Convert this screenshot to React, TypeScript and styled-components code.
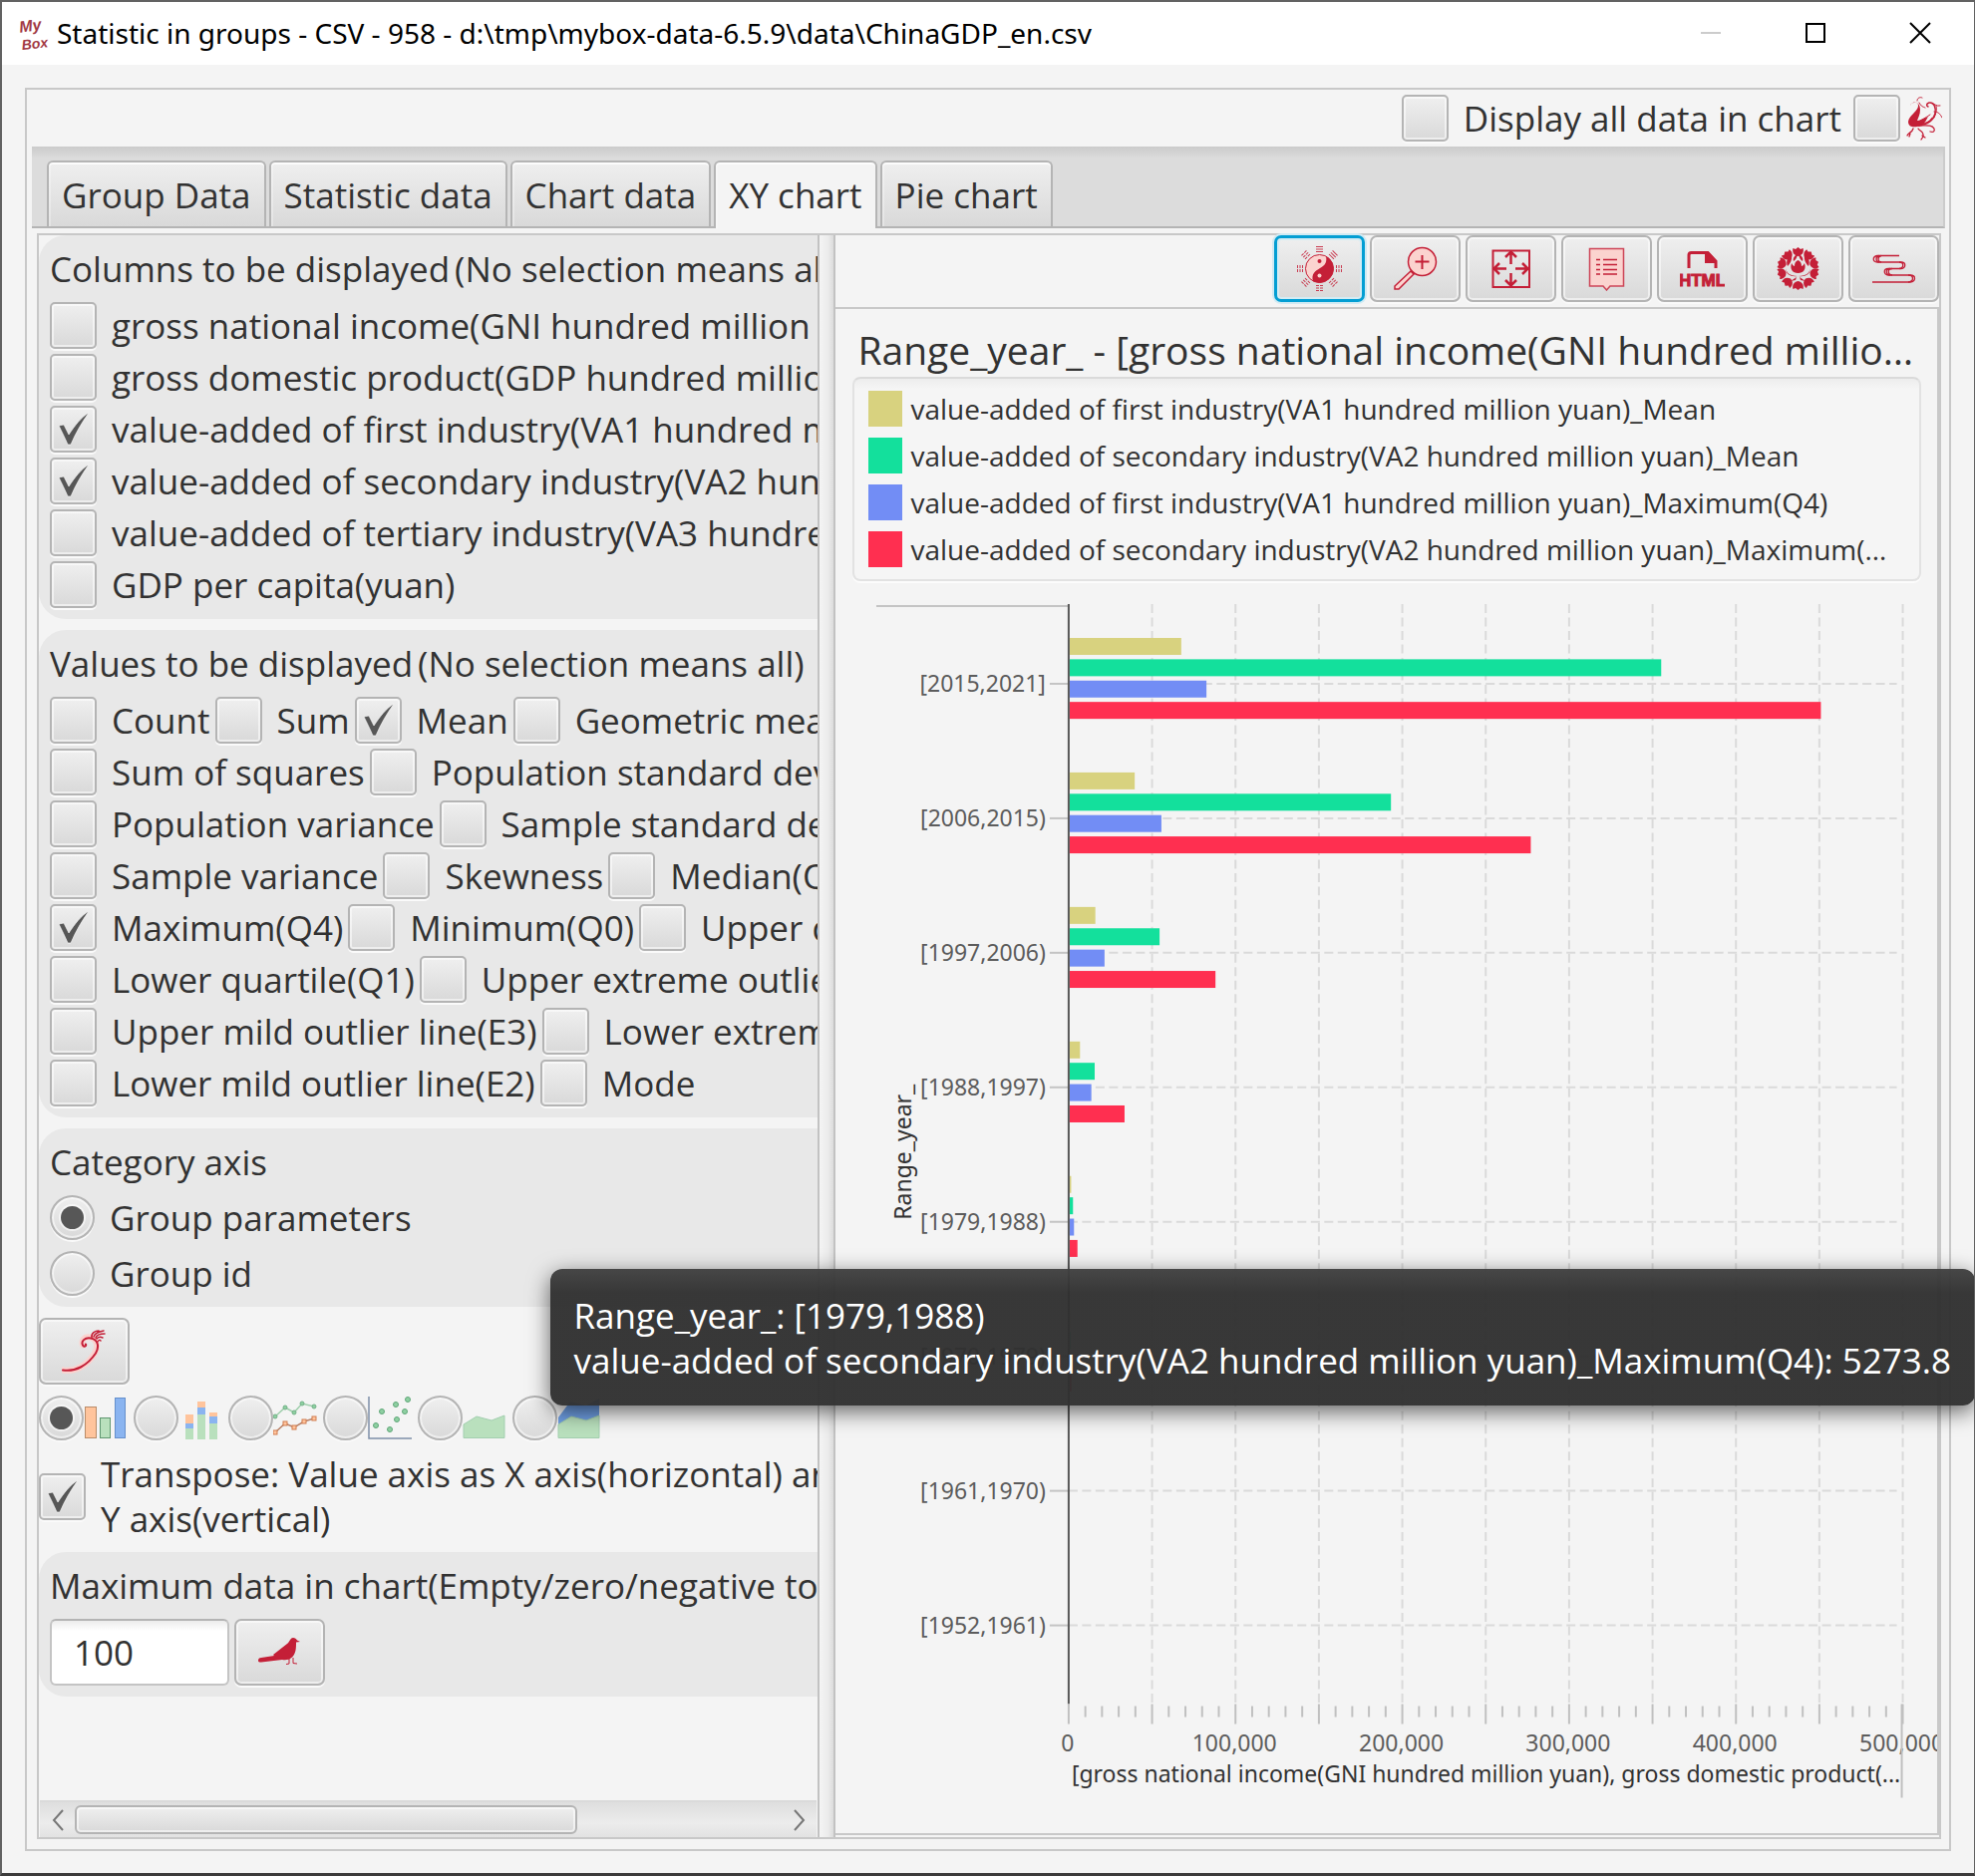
import React, { useId } from "react";
import styled, { createGlobalStyle, css } from "styled-components";

const RED = "#c41f37";
const PINK = "#fbd3cf";
const LINE = "#c8c8c8";
const INK = "#323232";

const Global = createGlobalStyle`
  * { box-sizing: border-box; }
  body { margin: 0; background: #f4f4f4; }
  body, button, input {
    font-family: "Open Sans", "Noto Sans", sans-serif;
    font-size: 35px;
    line-height: 45px;
    color: ${INK};
  }
  button { padding: 0; border: 0; background: none; }
`;

const raised = css`
  border: 2px solid #b4b4b4;
  background: linear-gradient(#efefef, #d9d9d9);
  box-shadow: inset 0 0 0 2px rgba(255, 255, 255, 0.55), 0 2px 0 #fafafa;
`;

/* ---------- window ---------- */

const Window = styled.div`
  position: relative;
  display: flex;
  flex-direction: column;
  height: 100vh;
  overflow: hidden;
  background: #f4f4f4;
  border: solid #626262;
  border-width: 2px 1px 3px 2px;
  border-bottom-color: #3c3b3b;
`;

const TitleBar = styled.header`
  display: flex;
  align-items: center;
  flex: none;
  height: 63px;
  padding: 0 2px 2px 14px;
  background: #fff;
`;

const TitleText = styled.h1`
  flex: 1;
  margin: 0 0 0 7px;
  font-family: "Noto Sans", sans-serif;
  font-size: 28px;
  font-weight: 400;
  line-height: 40px;
  color: #000;
  white-space: nowrap;
`;

const WindowButton = styled.button`
  display: grid;
  place-items: center;
  width: 105px;
  height: 60px;
`;

const Body = styled.main`
  flex: 1;
  display: flex;
  min-height: 0;
  padding: 23px 23px 22px;
`;

const Frame = styled.div`
  flex: 1;
  display: flex;
  flex-direction: column;
  min-width: 0;
  padding: 5px 4px 10px 5px;
  border: 2px solid ${LINE};
`;

const OptionsBar = styled.div`
  display: flex;
  justify-content: flex-end;
  align-items: center;
  gap: 12px;
  padding-bottom: 5px;
`;

/* ---------- tabs ---------- */

const TabStrip = styled.div`
  display: flex;
  align-items: flex-end;
  gap: 3px;
  flex: none;
  height: 82px;
  padding-left: 15px;
  border-right: 2px solid #cbcbcb;
  border-bottom: 2px solid #b4b4b4;
  background: linear-gradient(#cbcbcb, #dcdcdc 12px);
`;

const Tab = styled.button<{ $active?: boolean }>`
  height: 66px;
  padding: 0 13px;
  border: 2px solid #b4b4b4;
  border-bottom: 0;
  border-radius: 6px 6px 0 0;
  background: linear-gradient(#efefef, #d9d9d9);
  box-shadow: inset 0 2px 0 rgba(255, 255, 255, 0.8), inset 2px 0 0 rgba(255, 255, 255, 0.3);
  white-space: nowrap;
  ${(p) =>
    p.$active &&
    css`
      height: 68px;
      margin-bottom: -2px;
      padding-bottom: 2px;
      background: #f4f4f4;
    `}
`;

/* ---------- split pane ---------- */

const SplitPane = styled.div`
  flex: 1;
  display: flex;
  min-height: 0;
  margin: 5px 4px 0 5px;
  border: 2px solid ${LINE};
`;

const SidePane = styled.section`
  flex: 0 0 41%;
  display: flex;
  flex-direction: column;
  min-width: 0;
`;

const Divider = styled.div`
  flex: none;
  width: 18px;
  border: solid #c2c2c2;
  border-width: 0 2px;
  background: linear-gradient(90deg, #f4f4f4, #ececec 60%, #dcdcdc);
`;

const Viewport = styled.div`
  flex: 1;
  min-height: 0;
  overflow: hidden;
`;

const Form = styled.div`
  display: flex;
  flex-direction: column;
  gap: 11px;
  width: 1220px;
`;

const Group = styled.fieldset`
  display: flex;
  flex-direction: column;
  margin: 0;
  min-width: 0;
  padding: 11px;
  border: 0;
  border-radius: 27px;
  background: #e8e8e8;
`;

const GroupTitle = styled.div`
  display: flex;
  gap: 5px;
  margin-bottom: 11px;
  white-space: nowrap;
`;

const Rows = styled.div<{ $gap: number }>`
  display: flex;
  flex-direction: column;
  gap: ${(p) => p.$gap}px;
`;

const Row = styled.div`
  display: flex;
  align-items: center;
  gap: 5px;
`;

const Choice = styled.label`
  display: flex;
  align-items: center;
  gap: 15px;
  white-space: nowrap;
  svg { flex: none; }
`;

const IconChoice = styled(Choice)`
  gap: 0;
`;

const PhoenixChoice = styled(Choice)`
  gap: 6px;
  margin-right: 3px;
`;

const CheckCell = styled.span`
  display: grid;
  flex: none;
  width: 47px;
  height: 47px;
  > * { grid-area: 1 / 1; }
  svg { visibility: hidden; pointer-events: none; }
  input:checked + svg { visibility: visible; }
`;

const CheckInput = styled.input`
  appearance: none;
  margin: 0;
  width: 47px;
  height: 47px;
  border-radius: 5px;
  ${raised}
`;

const RadioInput = styled.input`
  appearance: none;
  display: grid;
  place-items: center;
  flex: none;
  margin: 0;
  width: 45px;
  height: 45px;
  border-radius: 50%;
  ${raised}
  &:checked::after {
    content: "";
    width: 23px;
    height: 23px;
    border-radius: 50%;
    background: #575757;
    box-shadow: 0 0 0 2px rgba(255, 255, 255, 0.6);
  }
`;

const ToolButton = styled.button<{ $focus?: boolean }>`
  display: grid;
  place-items: center;
  flex: none;
  width: 91px;
  height: 67px;
  border-radius: 7px;
  ${raised}
  ${(p) =>
    p.$focus &&
    css`
      border: 3px solid #039ed3;
      box-shadow: inset 0 0 0 2px #d4ecf4, 0 0 0 2px #d0eaf3;
    `}
`;

const FormButton = styled(ToolButton)`
  align-self: flex-start;
`;

const NumberField = styled.input`
  width: 180px;
  height: 67px;
  padding: 0 22px;
  border: 2px solid #c4c4c4;
  border-top-color: #b4b4b4;
  border-radius: 6px;
  background: linear-gradient(#ececec, #fff 10px);
`;

const ScrollBar = styled.div`
  display: flex;
  align-items: center;
  flex: none;
  height: 37px;
  margin: 0 1px;
  border-top: 2px solid #dadada;
  background: linear-gradient(#dedede, #ececec 60%, #e2e2e2);
`;

const ScrollTrack = styled.div`
  flex: 1;
  height: 29px;
`;

const ScrollThumb = styled.div`
  width: 71%;
  height: 29px;
  border-radius: 6px;
  ${raised}
  box-shadow: inset 0 0 0 2px rgba(255, 255, 255, 0.55);
`;

const ScrollButton = styled.button`
  display: grid;
  place-items: center;
  width: 35px;
  height: 30px;
`;

/* ---------- chart pane ---------- */

const ChartPane = styled.section`
  flex: 1;
  display: flex;
  flex-direction: column;
  min-width: 0;
  padding-bottom: 2px;
`;

const ToolBar = styled.div`
  display: flex;
  justify-content: flex-end;
  gap: 5px;
  flex: none;
  height: 72px;
`;

const ChartScroll = styled.div`
  flex: 1;
  min-height: 0;
  padding-top: 14px;
  overflow: hidden;
  border: solid ${LINE};
  border-width: 2px 2px 2px 0;
`;

const ChartTitle = styled.h2`
  margin: 0 18px 0 22px;
  font-size: 39px;
  font-weight: 400;
  line-height: 54px;
  white-space: nowrap;
  overflow: hidden;
  text-overflow: ellipsis;
`;

const Legend = styled.ul`
  display: flex;
  flex-direction: column;
  gap: 11px;
  margin: 0 16px 0 17px;
  padding: 12px 30px 12px 14px;
  list-style: none;
  border: 2px solid #e2e2e2;
  border-top-color: #dadada;
  border-radius: 8px;
  background: linear-gradient(#ededed, #f5f5f5 10px);
  box-shadow: 0 2px 0 #fcfcfc;
`;

const LegendItem = styled.li`
  display: flex;
  align-items: center;
  gap: 8px;
  height: 36px;
  font-size: 28px;
  line-height: 36px;
`;

const Swatch = styled.span<{ $color: string }>`
  flex: none;
  width: 34px;
  height: 36px;
  background: ${(p) => p.$color};
`;

const LegendText = styled.span`
  min-width: 0;
  white-space: nowrap;
  overflow: hidden;
  text-overflow: ellipsis;
`;

const Plot = styled.svg`
  display: block;
  width: 100%;
  margin-top: 7px;
  font-family: "Noto Sans", sans-serif;
  font-size: 23px;
`;

const Tooltip = styled.div`
  position: absolute;
  top: 1271px;
  right: -1px;
  padding: 24px 24px 23px;
  border-radius: 12px;
  background: linear-gradient(rgba(64, 64, 64, 0.96), rgba(48, 48, 48, 0.96) 24px);
  box-shadow: 0 6px 22px rgba(0, 0, 0, 0.6);
  color: #fff;
  white-space: nowrap;
`;

/* ---------- controls ---------- */

const Check = ({ label, on, children }: { label?: string; on?: boolean; children?: React.ReactNode }) => {
  const id = useId();
  return (
    <Choice htmlFor={id}>
      <CheckCell>
        <CheckInput id={id} type="checkbox" defaultChecked={on} />
        <svg width="47" height="47" viewBox="0 0 47 47" aria-hidden="true">
          <path d="M9 20l5-1 5 10C25 20 31 12 39 7c-7 10-13 20-18 32h-3C15 32 12 26 9 20z" fill="#575757" stroke="#fff" strokeWidth="1" strokeOpacity=".6" />
        </svg>
      </CheckCell>
      {label ? <span>{label}</span> : children}
    </Choice>
  );
};

const Radio = ({ name, label, on }: { name: string; label: string; on?: boolean }) => {
  const id = useId();
  return (
    <Choice htmlFor={id}>
      <RadioInput id={id} type="radio" name={name} defaultChecked={on} />
      <span>{label}</span>
    </Choice>
  );
};

/* ---------- icons ---------- */

const Icon = ({ children, size = 45 }: { children: React.ReactNode; size?: number }) => (
  <svg width={size} height={size} viewBox="0 0 45 45" fill="none" aria-hidden="true">
    {children}
  </svg>
);

const MyBoxLogo = () => (
  <svg width="34" height="42" viewBox="0 0 34 42" fill="#a23a45" fontFamily="Liberation Sans, sans-serif" fontStyle="italic" fontWeight="700" aria-hidden="true">
    <text x="4" y="20" fontSize="16" transform="rotate(-8 10 20)">My</text>
    <text x="6" y="37" fontSize="14" transform="rotate(-6 16 36)">Box</text>
  </svg>
);

const Phoenix = () => (
  <svg width="36" height="46" viewBox="0 0 36 46" fill="none" stroke={RED} strokeLinecap="round" aria-hidden="true">
    <path d="M4 10c1-4 7-5 8-1 1 6-9 10-10 17 0 5 5 6 9 5 6-1 8-4 11-10-5 2-8 4-11 4 1-3 3-6 3-11 0-5-3-8-6-7-2 0-4 1-4 3z" fill={RED} strokeWidth="0" />
    <path d="M11 5c0-3 3-4 5-3M13 7c2 4 4 4 6 5M12 26c6-3 9-5 12-7M14 28c7 0 10-3 12-6" strokeWidth="1" />
    <path d="M12 30c8-1 15-4 17-12 1-6-1-12-6-11-3 1-3 3-1 4" strokeWidth="1.500" />
    <path d="M27 8c2 0 3 3 7 2M28 16c4 0 6 2 8 6M30 10c1 4 0 8-2 12" strokeWidth="1" />
    <path d="M13 30c7 0 13-1 15 3 1 3-1 4-4 3M7 33c-1 4-5 4-6 7M12 33c2 3 6 3 5 8l-2 3M4 38l-1 3M16 40l3 2" strokeWidth="1.300" />
  </svg>
);

const Trigram = ({ angle, broken }: { angle: number; broken: boolean }) => (
  <g transform={`rotate(${angle} 22.5 22.5)`}>
    <path d="M19 .5h7M19 3h7M19 5.500h7" stroke={RED} strokeOpacity=".85" strokeWidth="1" strokeDasharray={broken ? "3 1" : undefined} />
  </g>
);

const YinYang = () => (
  <Icon>
    {[0, 45, 90, 135, 180, 225, 270, 315].map((a) => (
      <Trigram key={a} angle={a} broken={a > 45} />
    ))}
    <circle cx="22.500" cy="22.500" r="14" fill={PINK} stroke={RED} strokeWidth="1" />
    <path d="M29 10a14 14 0 1 1-13 25c-2-7 2-10 7-13 6-3 7-7 6-12z" fill={RED} />
    <circle cx="22.500" cy="15" r="2" fill={RED} />
    <circle cx="22.500" cy="29.500" r="2" fill={PINK} />
  </Icon>
);

const Magnifier = () => (
  <Icon>
    <path d="M18 25L2 40v3h4l15-15z" fill={PINK} stroke={RED} strokeWidth="1.500" />
    <circle cx="29.500" cy="15.500" r="14" fill={PINK} stroke={RED} strokeWidth="1.500" />
    <path d="M29.500 9v14M22.500 15.500h14" stroke={RED} strokeWidth="2" />
  </Icon>
);

const Expand = () => (
  <Icon>
    <rect x="4.500" y="4.500" width="36.500" height="36.500" stroke={RED} strokeWidth="2" />
    <path d="M22.500 18V6M17 11l5.500-5.500L28 11M22.500 27v12M17 34l5.500 5.500L28 34M18 22.500H6M11 17l-5.500 5.500L11 28M27 22.500h12M34 17l5.500 5.500L34 28" stroke={RED} strokeWidth="2.500" />
  </Icon>
);

const Note = () => (
  <Icon>
    <path d="M5.500 2.500h34V40H26l-3.500 4-3.500-4H5.500z" fill={PINK} stroke={RED} strokeOpacity=".8" strokeWidth="1.500" />
    <path d="M12 13.500h4M19 13.500h14M12 18.500h4M19 18.500h14M12 23.500h4M19 23.500h14M12 28h4M19 28h14" stroke={RED} strokeWidth="1.300" />
  </Icon>
);

const Html = () => (
  <Icon>
    <path d="M9 22V9q0-2.500 2.500-2.500H28L36 15v7" stroke={RED} strokeWidth="3" />
    <path d="M25 6h4l8 9v2H25z" fill={RED} />
    <text x="22.500" y="39.500" textAnchor="middle" fontFamily="Liberation Sans, sans-serif" fontSize="17" fontWeight="700" fill={RED} stroke={RED} strokeWidth="1">
      HTML
    </text>
  </Icon>
);

const PETAL = "M22.500 10c-5-1-6-5-5-8l2.500 1L22.500 1 25 3l2.500-1c1 3 0 7-5 8z";

const Peony = () => (
  <Icon>
    <g fill={RED}>
      {[0, 38, 72, 106, 143, 180, 217, 254, 288, 322].map((a) => (
        <path key={a} d={PETAL} transform={`rotate(${a} 22.5 22.5)`} />
      ))}
      <path d="M16 9c-4 2-6 6-4 11 2-2 5-6 4-11zM29 9c4 2 6 6 4 11-2-2-5-6-4-11zM20 9c-2 2-3 4-2 6 2-1 3-3 4-6zM25 9c2 2 3 4 2 6-2-1-3-3-4-6z" />
      <path d="M16 17c-2 6 1 10 6.500 10s8.500-4 6.500-10c-1 2-2 3-3 3 0-3-1-5-3.500-6-2.500 1-3.500 3-3.500 6-1 0-2-1-3-3z" />
      <path d="M10 21c0 5 4 9 12 9-6 1-12-1-12-9zM35 21c0 5-4 9-12 9 6 1 12-1 12-9zM21 31l-6 4 5-1zM24 31l6 4-5-1z" />
    </g>
  </Icon>
);

const River = () => (
  <Icon>
    <g stroke={RED} strokeWidth="1.300">
      <path d="M28 9.500H6c-5 1-5 6 0 6.500h24c5 0 5 6 0 6.500H17c-5 0-5 6 0 6.500h22c6 0 6 6 0 7H1" />
      <path d="M8 9.500c-4 1-4 6 0 6.500M10 9.500c-4 1-4 6 0 6.500M28 16c5 0 5 6 0 6.500M19 22.500c-5 0-5 6 0 6.500M21 22.500c-5 0-5 6 0 6.500M37 29c6 0 6 6 0 7" />
    </g>
  </Icon>
);

const Plume = () => (
  <Icon>
    <g strokeLinecap="round">
      <path d="M1 41.500c13 2 25-5 32-17 4-7 2-15-5-16-5-1-9 3-7 8" stroke={PINK} strokeWidth="6" />
      <path d="M1 41.500c13 2 25-5 33-17 4-7 2-14-5-15-6-1-10 3-8 7 1 2 4 1 3-1" stroke={RED} strokeWidth="2" />
      <path d="M30 9c-1-5 4-7 7-7M32 8c1-4 5-5 10-6M34 9c1-3 4-4 9-4M35 10c2-2 4-2 6-1M36 13c1-2 2-2 3-1" stroke={RED} strokeWidth="1.500" />
    </g>
  </Icon>
);

const Bird = () => (
  <Icon>
    <path d="M1 31c0-2 1-3 3-3l13-2-1-1 14-11c2-1 3-6 6-6 2 0 3 1 4 2.500l3 1.500-4 .5c0 6 0 11-4 15-3 3-7 3-10 2.500L4 32.500c-2 0-3 0-3-1.500z" fill={RED} />
    <path d="M32 29v5l-3 .500M36 28v5.500l4 .500" stroke={RED} strokeWidth="1" />
  </Icon>
);

const GREEN = "#b9e0bd";
const BLUE = "#8ab4f0";
const ORANGE = "#ffc49c";

const BarIcon = () => (
  <Icon>
    <rect x="1.500" y="11.500" width="11" height="31" fill={ORANGE} stroke="#b98c69" />
    <rect x="16.500" y="22.500" width="10" height="20" fill={GREEN} stroke="#5f9770" />
    <rect x="31.500" y="2.500" width="10" height="40" fill={BLUE} stroke="#6590cc" />
  </Icon>
);

const StackedIcon = () => (
  <Icon>
    {[[7, 19, 28, 33], [19, 6, 12, 19], [31, 17, 21, 28]].map(([x, a, b, c]) => (
      <g key={x}>
        <rect x={x} y={a} width="8" height={b - a} fill={ORANGE} />
        <rect x={x} y={b} width="8" height={c - b} fill={BLUE} />
        <rect x={x} y={c} width="8" height={44 - c} fill={GREEN} />
      </g>
    ))}
  </Icon>
);

const greenLine = [[2, 21], [12, 12], [21, 17], [29, 8], [41, 11]];
const orangeLine = [[2, 37], [12, 28], [21, 32], [31, 26], [41, 23]];

const LineIcon = () => (
  <Icon>
    <polyline points={greenLine.join(" ")} stroke="#9fcfac" strokeWidth="1.500" />
    {greenLine.map(([x, y]) => <circle key={x} cx={x} cy={y} r="2" fill="#8cd0a0" stroke="#74b088" />)}
    <polyline points={orangeLine.join(" ")} stroke="#b98268" strokeWidth="1.500" />
    {orangeLine.map(([x, y]) => <rect key={x} x={x - 2} y={y - 2} width="4" height="4" fill={ORANGE} stroke="#d07c50" />)}
  </Icon>
);

const ScatterIcon = () => (
  <Icon>
    <path d="M1 1v42h43" stroke="#7e8fa8" strokeWidth="1.500" />
    {[[8, 30], [14, 16], [22, 34], [29, 24], [28, 9], [37, 16], [40, 4]].map(([x, y]) => (
      <circle key={x} cx={x} cy={y} r="2.500" fill="#8fd0a2" stroke="#5fa678" />
    ))}
  </Icon>
);

const AreaIcon = () => (
  <Icon>
    <path d="M1 42.500V29l13-8 15 4 13-5v22.500z" fill={GREEN} stroke="#a3cfb0" />
  </Icon>
);

const StackedAreaIcon = () => (
  <Icon>
    <path d="M1 30V22L13 6l16 4 13-7v20z" fill="#6f9fe4" />
    <path d="M1 42.500V29l13-8 15 4 13-5v22.500z" fill={GREEN} stroke="#a3cfb0" />
  </Icon>
);

/* ---------- data ---------- */

const tabs = ["Group Data", "Statistic data", "Chart data", "XY chart", "Pie chart"];

const columns: [string, boolean][] = [
  ["gross national income(GNI hundred million yuan)", false],
  ["gross domestic product(GDP hundred million yuan)", false],
  ["value-added of first industry(VA1 hundred million yuan)", true],
  ["value-added of secondary industry(VA2 hundred million yuan)", true],
  ["value-added of tertiary industry(VA3 hundred million yuan)", false],
  ["GDP per capita(yuan)", false],
];

const valueRows = [
  ["Count", "Sum", "Mean", "Geometric mean"],
  ["Sum of squares", "Population standard deviation"],
  ["Population variance", "Sample standard deviation"],
  ["Sample variance", "Skewness", "Median(Q2)"],
  ["Maximum(Q4)", "Minimum(Q0)", "Upper quartile(Q3)"],
  ["Lower quartile(Q1)", "Upper extreme outlier line(E4)"],
  ["Upper mild outlier line(E3)", "Lower extreme outlier line(E1)"],
  ["Lower mild outlier line(E2)", "Mode"],
];
const checkedValues = ["Mean", "Maximum(Q4)"];

const chartKinds: [string, () => React.ReactElement][] = [
  ["Bar chart", BarIcon],
  ["Stacked bar chart", StackedIcon],
  ["Line chart", LineIcon],
  ["Scatter chart", ScatterIcon],
  ["Area chart", AreaIcon],
  ["Stacked area chart", StackedAreaIcon],
];

const tools: [string, () => React.ReactElement][] = [
  ["Style", YinYang],
  ["Zoom in", Magnifier],
  ["Fit size", Expand],
  ["Notes", Note],
  ["HTML", Html],
  ["Options", Peony],
  ["Flow", River],
];

const series = [
  { name: "value-added of first industry(VA1 hundred million yuan)_Mean", color: "#d8d27f" },
  { name: "value-added of secondary industry(VA2 hundred million yuan)_Mean", color: "#13e09c" },
  { name: "value-added of first industry(VA1 hundred million yuan)_Maximum(Q4)", color: "#728df5" },
  { name: "value-added of secondary industry(VA2 hundred million yuan)_Maximum(Q4)", color: "#ff2f50" },
];

const categories: [string, number[]][] = [
  ["[2015,2021]", [67500, 355200, 82600, 450904]],
  ["[2006,2015)", [39600, 193200, 55600, 277000]],
  ["[1997,2006)", [16000, 54500, 21500, 88000]],
  ["[1988,1997)", [6800, 15600, 13600, 33500]],
  ["[1979,1988)", [1500, 2600, 3200, 5273]],
  ["[1970,1979)", [900, 1100, 1100, 1700]],
  ["[1961,1970)", [0, 0, 0, 0]],
  ["[1952,1961)", [0, 0, 0, 0]],
];

/* ---------- chart ---------- */

const AXIS_X = 234;
const PLOT_W = 837;
const TOP = 16;
const BOTTOM = 1120;
const MAX = 500000;
const xOf = (v: number) => AXIS_X + (v / MAX) * PLOT_W;
const yOf = (i: number) => 96 + i * 135;

const BarPlot = () => (
  <Plot viewBox="0 0 1105 1240" role="img" aria-label="Range_year_ bar chart">
    {[...Array(10)].map((_, i) => (
      <line key={i} x1={xOf((i + 1) * 50000)} x2={xOf((i + 1) * 50000)} y1={TOP} y2={BOTTOM} stroke="#dadada" strokeWidth="2" strokeDasharray="9 4.5" />
    ))}
    {categories.map(([name, values], i) => (
      <g key={name}>
        <line x1={AXIS_X} x2={AXIS_X + 831} y1={yOf(i)} y2={yOf(i)} stroke="#dadada" strokeWidth="2" strokeDasharray="9 4.5" />
        <line x1={AXIS_X - 19} x2={AXIS_X} y1={yOf(i)} y2={yOf(i)} stroke="#c4c4c4" strokeWidth="2" />
        <text x={AXIS_X - 23} y={yOf(i) + 8} textAnchor="end" fill="#5c5c5c">{name}</text>
        {values.map((v, k) => (
          <rect key={k} x={AXIS_X + 1} y={yOf(i) - 46 + k * 21.4} width={v && xOf(v) - AXIS_X - 1} height="17" fill={series[k].color} />
        ))}
      </g>
    ))}
    <line x1="41" x2={AXIS_X} y1={TOP + 2} y2={TOP + 2} stroke="#c4c4c4" strokeWidth="2" />
    <line x1={AXIS_X} x2={AXIS_X} y1={TOP} y2={BOTTOM} stroke="#575757" strokeWidth="2" />
    {[...Array(51)].map((_, i) => (
      <line key={i} x1={xOf(i * 10000)} x2={xOf(i * 10000)} y1={i % 5 ? BOTTOM + 2 : BOTTOM} y2={i % 5 ? BOTTOM + 13 : BOTTOM + 20} stroke="#c0c0c0" strokeWidth="2" />
    ))}
    {[0, 1, 2, 3, 4, 5].map((i) => (
      <text key={i} x={xOf(i * 100000) - 1} y="1168" textAnchor="middle" fill="#5c5c5c">
        {(i * 100000).toLocaleString("en-US")}
      </text>
    ))}
    <line x1="1070" x2="1070" y1={BOTTOM} y2="1214" stroke="#c0c0c0" strokeWidth="2" />
    <text x="237" y="1199" fill={INK}>[gross national income(GNI hundred million yuan), gross domestic product(...</text>
    <text x="76" y="634" fill={INK} transform="rotate(-90 76 634)">Range_year_</text>
  </Plot>
);

/* ---------- page ---------- */

const KindChoice = ({ label, on, children }: { label: string; on: boolean; children: React.ReactNode }) => {
  const id = useId();
  return (
    <IconChoice htmlFor={id}>
      <RadioInput id={id} type="radio" name="kind" aria-label={label} defaultChecked={on} />
      {children}
    </IconChoice>
  );
};

const TipsCheck = () => {
  const id = useId();
  return (
    <PhoenixChoice htmlFor={id}>
      <CheckInput id={id} type="checkbox" aria-label="Show tips" />
      <Phoenix />
    </PhoenixChoice>
  );
};

export default function App() {
  return (
    <Window>
      <Global />
      <TitleBar>
        <MyBoxLogo />
        <TitleText>Statistic in groups - CSV - 958 - d:\tmp\mybox-data-6.5.9\data\ChinaGDP_en.csv</TitleText>
        <WindowButton aria-label="Minimize">
          <svg width="22" height="22" viewBox="0 0 22 22"><path d="M1 11h20" stroke="#ccc" strokeWidth="2" /></svg>
        </WindowButton>
        <WindowButton aria-label="Maximize">
          <svg width="22" height="22" viewBox="0 0 22 22"><path d="M2 2h18v18H2z" fill="none" stroke="#000" strokeWidth="2" /></svg>
        </WindowButton>
        <WindowButton aria-label="Close">
          <svg width="22" height="22" viewBox="0 0 22 22"><path d="M1 1l20 20M21 1L1 21" stroke="#000" strokeWidth="2" /></svg>
        </WindowButton>
      </TitleBar>
      <Body>
        <Frame>
          <OptionsBar>
            <Check label="Display all data in chart" />
            <TipsCheck />
          </OptionsBar>
          <TabStrip role="tablist">
            {tabs.map((t) => (
              <Tab key={t} role="tab" aria-selected={t === "XY chart"} $active={t === "XY chart"}>{t}</Tab>
            ))}
          </TabStrip>
          <SplitPane>
            <SidePane>
              <Viewport>
                <Form>
                  <Group>
                    <GroupTitle><span>Columns to be displayed</span><span>(No selection means all)</span></GroupTitle>
                    <Rows $gap={5}>
                      {columns.map(([label, on]) => <Check key={label} label={label} on={on} />)}
                    </Rows>
                  </Group>
                  <Group>
                    <GroupTitle><span>Values to be displayed</span><span>(No selection means all)</span></GroupTitle>
                    <Rows $gap={5}>
                      {valueRows.map((row) => (
                        <Row key={row[0]}>
                          {row.map((label) => <Check key={label} label={label} on={checkedValues.includes(label)} />)}
                        </Row>
                      ))}
                    </Rows>
                  </Group>
                  <Group>
                    <GroupTitle>Category axis</GroupTitle>
                    <Rows $gap={11}>
                      <Radio name="axis" label="Group parameters" on />
                      <Radio name="axis" label="Group id" />
                    </Rows>
                  </Group>
                  <FormButton aria-label="Plot style"><Plume /></FormButton>
                  <Row>
                    {chartKinds.map(([label, Glyph], i) => (
                      <KindChoice key={label} label={label} on={i === 0}><Glyph /></KindChoice>
                    ))}
                  </Row>
                  <Check on>
                    <span>Transpose: Value axis as X axis(horizontal) and category axis as<br />Y axis(vertical)</span>
                  </Check>
                  <Group>
                    <GroupTitle as="label" htmlFor="max-data">Maximum data in chart(Empty/zero/negative to display all)</GroupTitle>
                    <Row>
                      <NumberField id="max-data" type="text" defaultValue="100" />
                      <ToolButton aria-label="Apply"><Bird /></ToolButton>
                    </Row>
                  </Group>
                </Form>
              </Viewport>
              <ScrollBar>
                <ScrollButton aria-label="Scroll left">
                  <svg width="12" height="24" viewBox="0 0 12 24"><path d="M11 2L2 12l9 10" fill="none" stroke="#777" strokeWidth="2" /></svg>
                </ScrollButton>
                <ScrollTrack><ScrollThumb /></ScrollTrack>
                <ScrollButton aria-label="Scroll right">
                  <svg width="12" height="24" viewBox="0 0 12 24"><path d="M1 2l9 10-9 10" fill="none" stroke="#777" strokeWidth="2" /></svg>
                </ScrollButton>
              </ScrollBar>
            </SidePane>
            <Divider />
            <ChartPane>
              <ToolBar>
                {tools.map(([label, Glyph], i) => (
                  <ToolButton key={label} aria-label={label} $focus={i === 0}><Glyph /></ToolButton>
                ))}
              </ToolBar>
              <ChartScroll>
                <ChartTitle>Range_year_ - [gross national income(GNI hundred million yuan), gross domestic product(GDP hundred million yuan)]</ChartTitle>
                <Legend>
                  {series.map((s) => (
                    <LegendItem key={s.name}><Swatch $color={s.color} /><LegendText>{s.name}</LegendText></LegendItem>
                  ))}
                </Legend>
                <BarPlot />
              </ChartScroll>
            </ChartPane>
          </SplitPane>
        </Frame>
      </Body>
      <Tooltip role="tooltip">
        Range_year_: [1979,1988)
        <br />
        value-added of secondary industry(VA2 hundred million yuan)_Maximum(Q4): 5273.8
      </Tooltip>
    </Window>
  );
}
